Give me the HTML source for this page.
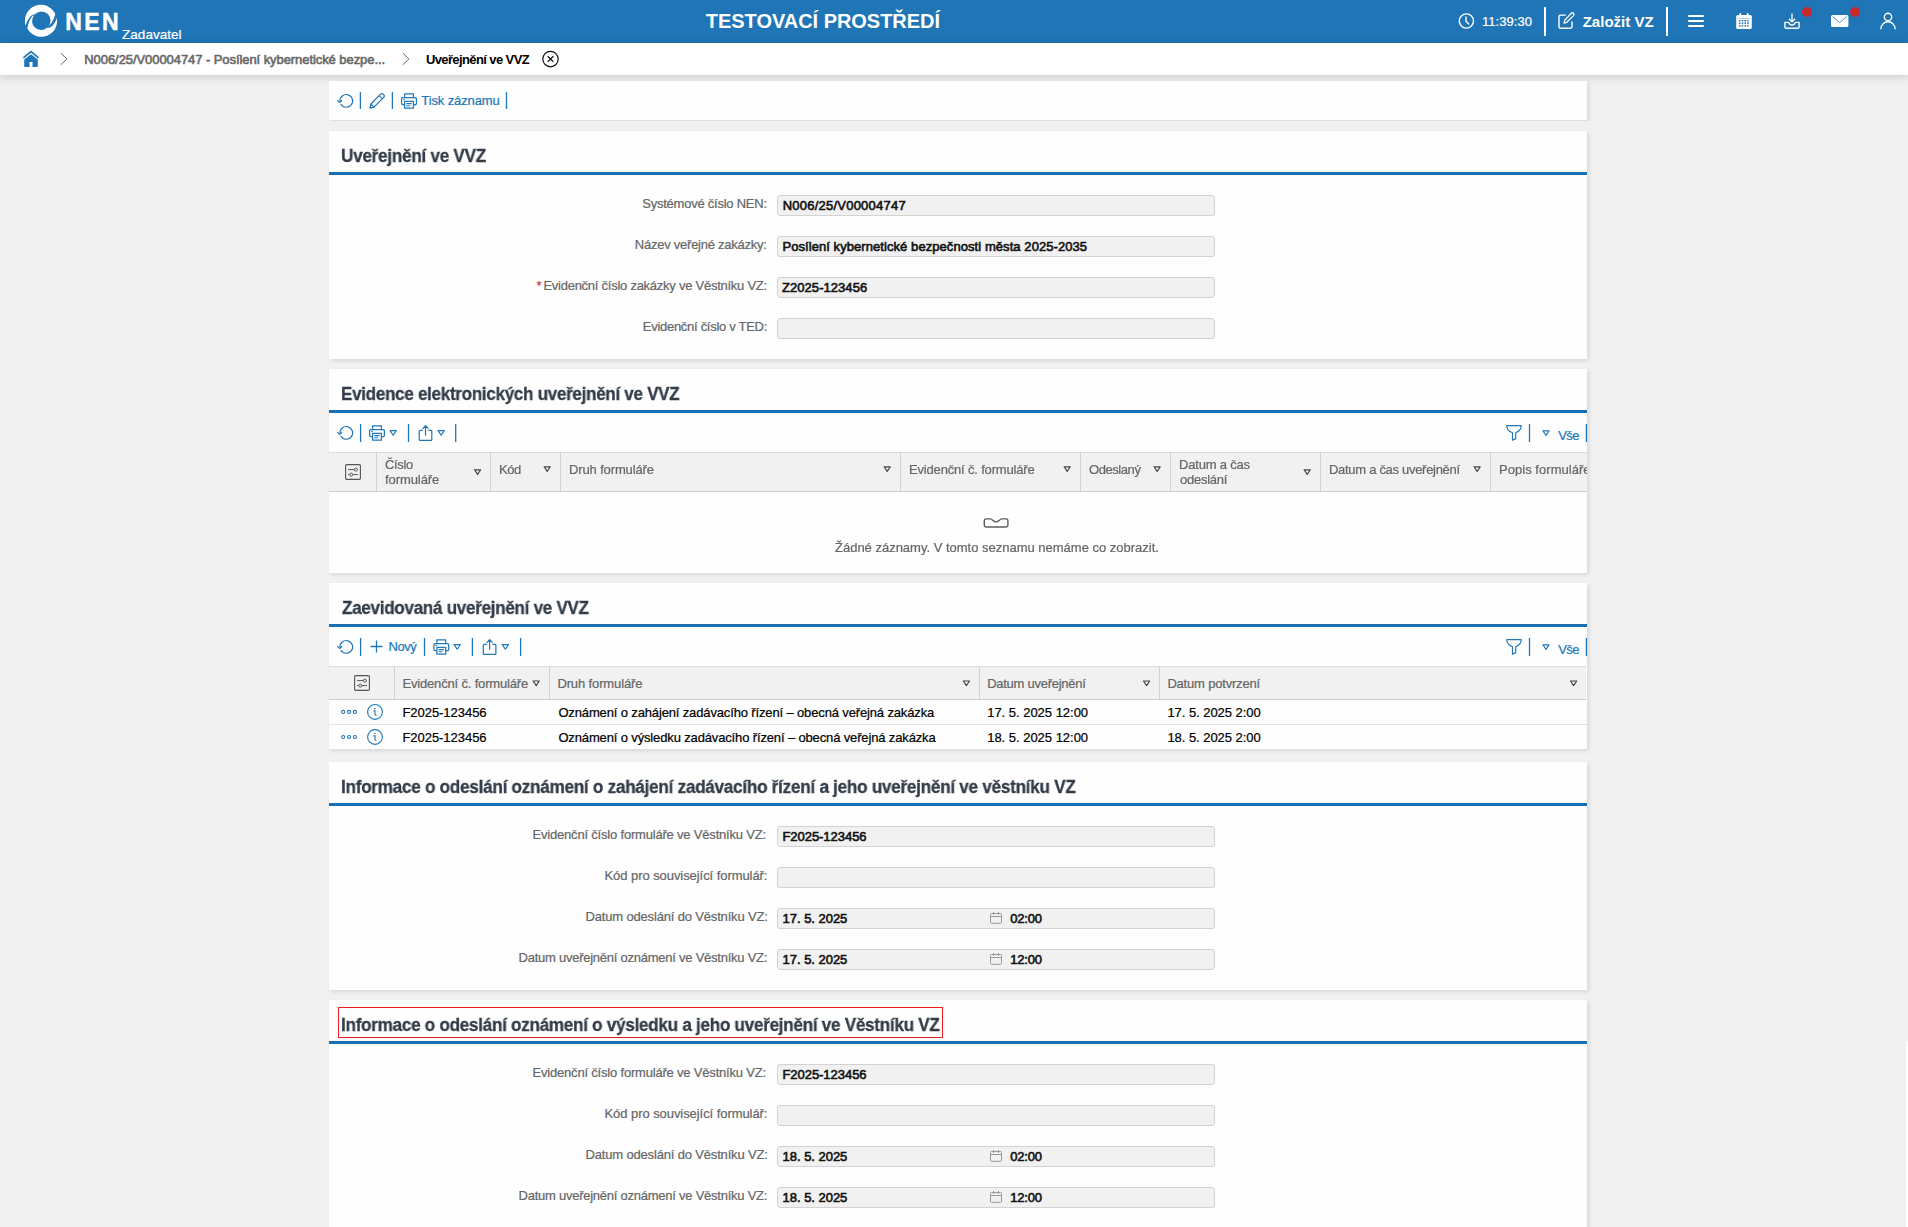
<!DOCTYPE html>
<html lang="cs"><head><meta charset="utf-8"><title>NEN</title>
<style>
html,body{margin:0;padding:0}
body{width:1908px;height:1227px;overflow:hidden;background:#f1f1f1;font-family:"Liberation Sans", sans-serif;position:relative}
.t{position:absolute;white-space:nowrap;line-height:1;display:block}
.abs{position:absolute}
</style></head>
<body>
<div class="abs" style="left:0px;top:0px;width:1908px;height:43px;background:#1f75b5"></div>
<svg class="abs" style="left:20px;top:0px;overflow:visible" width="44" height="44" viewBox="0 0 44 44"><path d="M5.4 25.6 C5.33 25.30 5.05 24.45 4.98 23.80 C4.91 23.15 4.97 22.62 4.99 21.71 C5.01 20.79 4.95 19.44 5.11 18.33 C5.27 17.22 5.56 16.11 5.95 15.06 C6.34 14.01 6.86 12.98 7.46 12.04 C8.07 11.10 8.79 10.20 9.58 9.41 C10.37 8.61 11.26 7.89 12.20 7.28 C13.14 6.68 14.17 6.16 15.22 5.76 C16.27 5.37 17.38 5.08 18.49 4.92 C19.60 4.76 20.75 4.71 21.86 4.79 C22.98 4.86 24.11 5.06 25.19 5.37 C26.26 5.68 27.33 6.11 28.32 6.65 C29.30 7.18 30.25 7.83 31.10 8.55 C31.95 9.28 32.74 10.12 33.42 11.01 C34.10 11.90 34.94 13.10 35.16 13.90 C35.39 14.70 34.93 15.15 34.75 15.80 C34.57 16.45 34.36 17.08 34.10 17.80 C33.84 18.52 33.58 19.32 33.20 20.10 C32.82 20.88 32.30 21.75 31.80 22.50 C31.30 23.25 30.75 23.95 30.20 24.60 C29.65 25.25 28.78 26.10 28.50 26.40 L28.0 26.9 A9.05 9.05 0 1 0 15.0 14.3 C14.67 14.37 13.50 14.55 13.00 14.70 C12.50 14.85 12.47 14.85 12.00 15.20 C11.53 15.55 10.78 16.17 10.20 16.80 C9.62 17.43 9.02 18.25 8.50 19.00 C7.98 19.75 7.48 20.52 7.10 21.30 C6.72 22.08 6.48 22.98 6.20 23.70 C5.92 24.42 5.53 25.28 5.40 25.60 Z" fill="#fff"/><path d="M36.6 18.0 C36.66 18.20 36.87 18.42 36.93 19.18 C37.00 19.94 37.09 21.43 36.98 22.54 C36.88 23.64 36.66 24.77 36.32 25.83 C35.99 26.89 35.53 27.94 34.98 28.90 C34.43 29.87 33.76 30.80 33.02 31.62 C32.28 32.45 31.42 33.22 30.52 33.87 C29.62 34.52 28.63 35.09 27.61 35.53 C26.59 35.98 25.50 36.32 24.41 36.54 C23.32 36.76 22.18 36.86 21.07 36.85 C19.96 36.83 18.82 36.69 17.74 36.44 C16.65 36.19 15.57 35.81 14.57 35.34 C13.56 34.86 12.59 34.27 11.70 33.59 C10.82 32.91 9.99 32.12 9.28 31.27 C8.56 30.42 7.65 29.21 7.39 28.49 C7.14 27.78 7.66 27.52 7.75 27.00 C7.84 26.48 7.79 26.08 7.95 25.40 C8.11 24.72 8.39 23.78 8.70 22.90 C9.01 22.02 9.38 20.95 9.80 20.10 C10.22 19.25 10.73 18.52 11.20 17.80 C11.67 17.08 12.37 16.13 12.60 15.80 L13.9 15.5 A9.05 9.05 0 0 0 27.0 27.85 C27.47 27.81 29.00 27.88 29.80 27.60 C30.60 27.33 31.18 26.73 31.80 26.20 C32.42 25.67 32.95 25.08 33.50 24.40 C34.05 23.72 34.67 22.88 35.10 22.10 C35.53 21.32 35.85 20.38 36.10 19.70 C36.35 19.02 36.52 18.28 36.60 18.00 Z" fill="#fff"/></svg>
<svg class="abs" style="left:1458px;top:13px;overflow:visible" width="17" height="17" viewBox="0 0 17 17" ><g transform="translate(0.40,0.00)"><circle cx="8" cy="8" r="7.1" fill="none" stroke="#fff" stroke-width="1.4"/><path d="M7.6 4 V8.3 L10.3 11" fill="none" stroke="#fff" stroke-width="1.4" stroke-linecap="round"/></g></svg>
<div class="abs" style="left:1544px;top:7px;width:2.2px;height:29px;background:#fff"></div>
<svg class="abs" style="left:1558px;top:12px;overflow:visible" width="18" height="18" viewBox="0 0 18 18" ><g transform="translate(0.20,0.20)"><path d="M7.6 2.9 H2.2 a1.4 1.4 0 0 0 -1.4 1.4 V14.6 a1.4 1.4 0 0 0 1.4 1.4 H12.4 a1.4 1.4 0 0 0 1.4 -1.4 V9.4" fill="none" stroke="#fff" stroke-width="1.4"/><path d="M12.9 1.2 a1.5 1.5 0 0 1 2.4 2.2 L8.6 10.1 L5.8 10.9 L6.6 8 Z" fill="none" stroke="#fff" stroke-width="1.3" stroke-linejoin="round"/></g></svg>
<div class="abs" style="left:1666px;top:7px;width:2.2px;height:29px;background:#fff"></div>
<div class="abs" style="left:1688px;top:14.5px;width:16px;height:2.4px;background:#fff;border-radius:1.2px"></div><div class="abs" style="left:1688px;top:19.8px;width:16px;height:2.4px;background:#fff;border-radius:1.2px"></div><div class="abs" style="left:1688px;top:25.1px;width:16px;height:2.4px;background:#fff;border-radius:1.2px"></div>
<svg class="abs" style="left:1736px;top:13px;overflow:visible" width="17" height="17" viewBox="0 0 17 17" ><g transform="translate(0.00,0.00)"><rect x="0.2" y="1.9" width="15.6" height="14" rx="1.5" fill="#fff"/><rect x="2.9" y="7.0" width="1.55" height="1.45" fill="#1f75b5"/><rect x="5.65" y="7.0" width="1.55" height="1.45" fill="#1f75b5"/><rect x="8.4" y="7.0" width="1.55" height="1.45" fill="#1f75b5"/><rect x="11.15" y="7.0" width="1.55" height="1.45" fill="#1f75b5"/><rect x="2.9" y="9.55" width="1.55" height="1.45" fill="#1f75b5"/><rect x="5.65" y="9.55" width="1.55" height="1.45" fill="#1f75b5"/><rect x="8.4" y="9.55" width="1.55" height="1.45" fill="#1f75b5"/><rect x="11.15" y="9.55" width="1.55" height="1.45" fill="#1f75b5"/><rect x="2.9" y="12.1" width="1.55" height="1.45" fill="#1f75b5"/><rect x="5.65" y="12.1" width="1.55" height="1.45" fill="#1f75b5"/><rect x="8.4" y="12.1" width="1.55" height="1.45" fill="#1f75b5"/><rect x="11.15" y="12.1" width="1.55" height="1.45" fill="#1f75b5"/><rect x="1.6" y="5.3" width="12.8" height="0.7" fill="#1f75b5" opacity="0.55"/><rect x="3.5" y="0" width="1.7" height="3.6" rx="0.8" fill="#fff"/><rect x="10.8" y="0" width="1.7" height="3.6" rx="0.8" fill="#fff"/></g></svg>
<svg class="abs" style="left:1784px;top:13px;overflow:visible" width="17" height="17" viewBox="0 0 17 17" ><g transform="translate(0.00,0.00)"><path d="M0.9 9.4 H4.6 a3.5 3.5 0 0 0 6.8 0 H15.1 V14 a1.2 1.2 0 0 1 -1.2 1.2 H2.1 a1.2 1.2 0 0 1 -1.2 -1.2 Z" fill="none" stroke="#fff" stroke-width="1.4" stroke-linejoin="round"/><path d="M8 0.4 V8.6 M4.9 5.8 L8 8.9 L11.1 5.8" fill="none" stroke="#fff" stroke-width="1.3"/></g></svg>
<div class="abs" style="left:1802px;top:7px;width:10.2px;height:10.2px;background:#c9282d;border-radius:50%"></div>
<svg class="abs" style="left:1831px;top:15px;overflow:visible" width="19" height="13" viewBox="0 0 19 13" ><g transform="translate(0.00,0.00)"><rect x="0" y="0" width="17.4" height="12" rx="1.6" fill="#fff"/><path d="M1.6 1.4 L8.7 7.6 L15.8 1.4" fill="none" stroke="#1f75b5" stroke-width="0.8"/></g></svg>
<div class="abs" style="left:1850px;top:7px;width:10.2px;height:10.2px;background:#c9282d;border-radius:50%"></div>
<svg class="abs" style="left:1880px;top:12px;overflow:visible" width="17" height="18" viewBox="0 0 17 18" ><g transform="translate(0.00,0.60)"><circle cx="8" cy="4.4" r="3.7" fill="none" stroke="#fff" stroke-width="1.4"/><path d="M0.8 16.6 a7.2 7.4 0 0 1 14.4 0" fill="none" stroke="#fff" stroke-width="1.4"/></g></svg>
<div class="abs" style="left:0px;top:43px;width:1908px;height:32px;background:#fff;box-shadow:0 2px 10px rgba(0,0,0,.16)"></div>
<svg class="abs" style="left:23px;top:51px;overflow:visible" width="17" height="17" viewBox="0 0 17 17" ><g transform="translate(0.00,0.00)"><path d="M0.4 6.9 L8 0.7 L15.6 6.9" fill="none" stroke="#1f75b5" stroke-width="1.7" stroke-linejoin="miter"/><path d="M1.2 8.6 L8 3.2 L14.8 8.6 V14.9 a1 1 0 0 1 -1 1 H9.5 V11 H6.5 V15.9 H2.2 a1 1 0 0 1 -1 -1 Z" fill="#1f75b5"/></g></svg>
<svg class="abs" style="left:60px;top:52px;overflow:visible" width="9" height="14" viewBox="0 0 9 14" ><g transform="translate(0.00,0.50)"><path d="M0.8 0.6 L6.9 6.5 L0.8 12.4" fill="none" stroke="#666" stroke-width="1.0"/></g></svg>
<svg class="abs" style="left:402px;top:52px;overflow:visible" width="9" height="14" viewBox="0 0 9 14" ><g transform="translate(0.00,0.50)"><path d="M0.8 0.6 L6.9 6.5 L0.8 12.4" fill="none" stroke="#666" stroke-width="1.0"/></g></svg>
<svg class="abs" style="left:542px;top:50px;overflow:visible" width="18" height="18" viewBox="0 0 18 18" ><g transform="translate(0.00,0.60)"><circle cx="8.5" cy="8.5" r="7.7" fill="none" stroke="#111" stroke-width="1.2"/><path d="M5.7 5.7 L11.3 11.3 M11.3 5.7 L5.7 11.3" stroke="#111" stroke-width="1.3"/></g></svg>
<div class="abs" style="left:329px;top:81px;width:1258px;height:39px;background:#fefefe;box-shadow:2px 2px 4px rgba(0,0,0,.105);clip-path:inset(-10px -10px -1px -10px)"></div>
<svg class="abs" style="left:337px;top:93px;overflow:visible" width="17" height="16" viewBox="0 0 17 16" ><g transform="translate(0.00,0.60)"><path d="M3.0 7.9 A6.35 6.35 0 1 1 3.75 10.35" fill="none" stroke="#2177b7" stroke-width="1.2"/><path d="M0.3 6.5 L2.75 8.9 L5.1 6.7" fill="none" stroke="#2177b7" stroke-width="1.2" stroke-linejoin="miter"/></g></svg>
<svg class="abs" style="left:359px;top:92px;overflow:visible" width="3" height="18" viewBox="0 0 3 18" ><g transform="translate(0.40,0.00)"><rect x="0.35" y="0" width="1.3" height="17" fill="#2177b7"/></g></svg>
<svg class="abs" style="left:369px;top:93px;overflow:visible" width="17" height="17" viewBox="0 0 17 17" ><g transform="translate(0.00,0.00)"><path d="M11.3 1.4 a2.2 2.2 0 0 1 3.2 3.2 L5 14.1 L0.9 15.1 L1.9 11 Z" fill="none" stroke="#2177b7" stroke-width="1.2" stroke-linejoin="round"/><path d="M10.2 2.6 L13.4 5.8 M1.9 11 L5 14.1" fill="none" stroke="#2177b7" stroke-width="1.1"/></g></svg>
<svg class="abs" style="left:391px;top:92px;overflow:visible" width="3" height="18" viewBox="0 0 3 18" ><g transform="translate(0.40,0.00)"><rect x="0.35" y="0" width="1.3" height="17" fill="#2177b7"/></g></svg>
<svg class="abs" style="left:401px;top:93px;overflow:visible" width="17" height="17" viewBox="0 0 17 17" ><g transform="translate(0.00,0.00)"><path d="M3.6 4.6 V0.8 H12.4 V4.6" fill="none" stroke="#2177b7" stroke-width="1.2" stroke-linejoin="round"/><path d="M3.6 11.6 H1.8 a1.2 1.2 0 0 1 -1.2 -1.2 V5.8 a1.2 1.2 0 0 1 1.2 -1.2 H14.2 a1.2 1.2 0 0 1 1.2 1.2 V10.4 a1.2 1.2 0 0 1 -1.2 1.2 H12.4" fill="none" stroke="#2177b7" stroke-width="1.2" stroke-linejoin="round"/><rect x="3.6" y="8.4" width="8.8" height="6.8" fill="#fff" stroke="#2177b7" stroke-width="1.2" stroke-linejoin="round"/><path d="M5.3 10.6 H10.7 M5.3 12.8 H9.2" stroke="#2177b7" stroke-width="1.1"/><rect x="2.2" y="6.1" width="1.7" height="1.1" fill="#2177b7"/></g></svg>
<svg class="abs" style="left:505px;top:92px;overflow:visible" width="3" height="18" viewBox="0 0 3 18" ><g transform="translate(0.50,0.00)"><rect x="0.35" y="0" width="1.3" height="17" fill="#2177b7"/></g></svg>
<div class="abs" style="left:329px;top:131px;width:1258px;height:228px;background:#fefefe;box-shadow:2px 2px 4px rgba(0,0,0,.105)"></div>
<div class="abs" style="left:329px;top:172px;width:1258px;height:3px;background:#1a6fb3"></div>
<div class="abs" style="left:777px;top:195px;width:436px;height:19px;background:#f1f1f1;border:1px solid #d3d3d3;border-radius:3px"></div>
<div class="abs" style="left:777px;top:236px;width:436px;height:19px;background:#f1f1f1;border:1px solid #d3d3d3;border-radius:3px"></div>
<div class="abs" style="left:777px;top:277px;width:436px;height:19px;background:#f1f1f1;border:1px solid #d3d3d3;border-radius:3px"></div>
<div class="abs" style="left:777px;top:318px;width:436px;height:19px;background:#f1f1f1;border:1px solid #d3d3d3;border-radius:3px"></div>
<div class="abs" style="left:329px;top:369px;width:1258px;height:204px;background:#fefefe;box-shadow:2px 2px 4px rgba(0,0,0,.105)"></div>
<div class="abs" style="left:329px;top:410px;width:1258px;height:3px;background:#1a6fb3"></div>
<svg class="abs" style="left:337px;top:425px;overflow:visible" width="17" height="16" viewBox="0 0 17 16" ><g transform="translate(0.00,0.60)"><path d="M3.0 7.9 A6.35 6.35 0 1 1 3.75 10.35" fill="none" stroke="#2177b7" stroke-width="1.2"/><path d="M0.3 6.5 L2.75 8.9 L5.1 6.7" fill="none" stroke="#2177b7" stroke-width="1.2" stroke-linejoin="miter"/></g></svg>
<svg class="abs" style="left:359px;top:424px;overflow:visible" width="3" height="19" viewBox="0 0 3 19" ><g transform="translate(0.60,0.00)"><rect x="0.35" y="0" width="1.3" height="18" fill="#2177b7"/></g></svg>
<svg class="abs" style="left:369px;top:425px;overflow:visible" width="17" height="17" viewBox="0 0 17 17" ><g transform="translate(0.00,0.00)"><path d="M3.6 4.6 V0.8 H12.4 V4.6" fill="none" stroke="#2177b7" stroke-width="1.2" stroke-linejoin="round"/><path d="M3.6 11.6 H1.8 a1.2 1.2 0 0 1 -1.2 -1.2 V5.8 a1.2 1.2 0 0 1 1.2 -1.2 H14.2 a1.2 1.2 0 0 1 1.2 1.2 V10.4 a1.2 1.2 0 0 1 -1.2 1.2 H12.4" fill="none" stroke="#2177b7" stroke-width="1.2" stroke-linejoin="round"/><rect x="3.6" y="8.4" width="8.8" height="6.8" fill="#fff" stroke="#2177b7" stroke-width="1.2" stroke-linejoin="round"/><path d="M5.3 10.6 H10.7 M5.3 12.8 H9.2" stroke="#2177b7" stroke-width="1.1"/><rect x="2.2" y="6.1" width="1.7" height="1.1" fill="#2177b7"/></g></svg>
<svg class="abs" style="left:389px;top:430px;overflow:visible" width="9" height="7" viewBox="0 0 9 7" ><g transform="translate(0.20,0.00)"><path d="M0.9 0.6 H7.1 L4 5.2 Z" fill="none" stroke="#2177b7" stroke-width="1.15" stroke-linejoin="round"/></g></svg>
<svg class="abs" style="left:407px;top:424px;overflow:visible" width="3" height="19" viewBox="0 0 3 19" ><g transform="translate(0.50,0.00)"><rect x="0.35" y="0" width="1.3" height="18" fill="#2177b7"/></g></svg>
<svg class="abs" style="left:418px;top:425px;overflow:visible" width="15" height="17" viewBox="0 0 15 17" ><g transform="translate(0.50,0.00)"><path d="M4.2 5.4 H1.6 a0.9 0.9 0 0 0 -0.9 0.9 V14.4 a0.9 0.9 0 0 0 0.9 0.9 H12.4 a0.9 0.9 0 0 0 0.9 -0.9 V6.3 a0.9 0.9 0 0 0 -0.9 -0.9 H9.8" fill="none" stroke="#2177b7" stroke-width="1.2" stroke-linejoin="round"/><path d="M7 10.2 V0.9 M4.4 3.3 L7 0.7 L9.6 3.3" fill="none" stroke="#2177b7" stroke-width="1.2" stroke-linecap="round" stroke-linejoin="round"/></g></svg>
<svg class="abs" style="left:437px;top:430px;overflow:visible" width="9" height="7" viewBox="0 0 9 7" ><g transform="translate(0.20,0.00)"><path d="M0.9 0.6 H7.1 L4 5.2 Z" fill="none" stroke="#2177b7" stroke-width="1.15" stroke-linejoin="round"/></g></svg>
<svg class="abs" style="left:454px;top:424px;overflow:visible" width="3" height="19" viewBox="0 0 3 19" ><g transform="translate(0.70,0.00)"><rect x="0.35" y="0" width="1.3" height="18" fill="#2177b7"/></g></svg>
<svg class="abs" style="left:1506px;top:425px;overflow:visible" width="17" height="17" viewBox="0 0 17 17" ><g transform="translate(0.00,0.00)"><path d="M0.8 0.7 H15.2 C15.2 4.2 12.6 6.6 9.7 7.8 V13.6 L6.5 15.3 V7.8 C3.4 6.6 0.8 4.2 0.8 0.7 Z" fill="none" stroke="#2177b7" stroke-width="1.2" stroke-linejoin="round"/></g></svg>
<svg class="abs" style="left:1528px;top:424px;overflow:visible" width="3" height="19" viewBox="0 0 3 19" ><g transform="translate(0.50,0.00)"><rect x="0.35" y="0" width="1.3" height="18" fill="#2177b7"/></g></svg>
<svg class="abs" style="left:1542px;top:430px;overflow:visible" width="9" height="7" viewBox="0 0 9 7" ><g transform="translate(0.00,0.20)"><path d="M0.9 0.6 H7.1 L4 5.2 Z" fill="none" stroke="#2177b7" stroke-width="1.15" stroke-linejoin="round"/></g></svg>
<svg class="abs" style="left:1585px;top:424px;overflow:visible" width="3" height="19" viewBox="0 0 3 19" ><g transform="translate(0.40,0.00)"><rect x="0.35" y="0" width="1.3" height="18" fill="#2177b7"/></g></svg>
<div class="abs" style="left:329px;top:452px;width:1258px;height:38px;background:#f1f1f1;border-top:1px solid #dcdcdc;border-bottom:1px solid #cdcdcd"></div>
<div class="abs" style="left:376px;top:453px;width:1px;height:38px;background:#d2d2d2"></div>
<div class="abs" style="left:490px;top:453px;width:1px;height:38px;background:#d2d2d2"></div>
<div class="abs" style="left:560px;top:453px;width:1px;height:38px;background:#d2d2d2"></div>
<div class="abs" style="left:900px;top:453px;width:1px;height:38px;background:#d2d2d2"></div>
<div class="abs" style="left:1080px;top:453px;width:1px;height:38px;background:#d2d2d2"></div>
<div class="abs" style="left:1170px;top:453px;width:1px;height:38px;background:#d2d2d2"></div>
<div class="abs" style="left:1320px;top:453px;width:1px;height:38px;background:#d2d2d2"></div>
<div class="abs" style="left:1490px;top:453px;width:1px;height:38px;background:#d2d2d2"></div>
<svg class="abs" style="left:345px;top:464px;overflow:visible" width="17" height="17" viewBox="0 0 17 17" ><g transform="translate(0.00,0.00)"><rect x="0.6" y="0.6" width="14.8" height="14.8" rx="1.2" fill="none" stroke="#555" stroke-width="1.1"/><path d="M3 5.6 H9.2 M12.4 5.6 H13 M3 10.6 H4.4 M8 10.6 H13" stroke="#555" stroke-width="1"/><circle cx="10.8" cy="5.6" r="1.5" fill="none" stroke="#555" stroke-width="1"/><circle cx="6.2" cy="10.6" r="1.5" fill="none" stroke="#555" stroke-width="1"/></g></svg>
<svg class="abs" style="left:473px;top:469px;overflow:visible" width="9" height="7" viewBox="0 0 9 7" ><g transform="translate(0.60,0.20)"><path d="M0.9 0.6 H7.1 L4 5.2 Z" fill="none" stroke="#444" stroke-width="1.15" stroke-linejoin="round"/></g></svg>
<svg class="abs" style="left:543px;top:466px;overflow:visible" width="9" height="7" viewBox="0 0 9 7" ><g transform="translate(0.20,0.20)"><path d="M0.9 0.6 H7.1 L4 5.2 Z" fill="none" stroke="#444" stroke-width="1.15" stroke-linejoin="round"/></g></svg>
<svg class="abs" style="left:883px;top:466px;overflow:visible" width="9" height="7" viewBox="0 0 9 7" ><g transform="translate(0.20,0.20)"><path d="M0.9 0.6 H7.1 L4 5.2 Z" fill="none" stroke="#444" stroke-width="1.15" stroke-linejoin="round"/></g></svg>
<svg class="abs" style="left:1063px;top:466px;overflow:visible" width="9" height="7" viewBox="0 0 9 7" ><g transform="translate(0.20,0.20)"><path d="M0.9 0.6 H7.1 L4 5.2 Z" fill="none" stroke="#444" stroke-width="1.15" stroke-linejoin="round"/></g></svg>
<svg class="abs" style="left:1153px;top:466px;overflow:visible" width="9" height="7" viewBox="0 0 9 7" ><g transform="translate(0.20,0.20)"><path d="M0.9 0.6 H7.1 L4 5.2 Z" fill="none" stroke="#444" stroke-width="1.15" stroke-linejoin="round"/></g></svg>
<svg class="abs" style="left:1303px;top:469px;overflow:visible" width="9" height="7" viewBox="0 0 9 7" ><g transform="translate(0.20,0.20)"><path d="M0.9 0.6 H7.1 L4 5.2 Z" fill="none" stroke="#444" stroke-width="1.15" stroke-linejoin="round"/></g></svg>
<svg class="abs" style="left:1473px;top:466px;overflow:visible" width="9" height="7" viewBox="0 0 9 7" ><g transform="translate(0.20,0.20)"><path d="M0.9 0.6 H7.1 L4 5.2 Z" fill="none" stroke="#444" stroke-width="1.15" stroke-linejoin="round"/></g></svg>
<svg class="abs" style="left:983px;top:518px;overflow:visible" width="27" height="11" viewBox="0 0 27 11" ><g transform="translate(0.00,0.00)"><path d="M3 0.9 H7.4 C9.6 0.9 10.2 3.9 13.1 3.9 C16 3.9 16.6 0.9 18.8 0.9 H23.2 a1.7 1.7 0 0 1 1.7 1.7 V7.3 a1.7 1.7 0 0 1 -1.7 1.7 H3 a1.7 1.7 0 0 1 -1.7 -1.7 V2.6 a1.7 1.7 0 0 1 1.7 -1.7 Z" fill="none" stroke="#5c5c5c" stroke-width="1.4" stroke-linejoin="round"/></g></svg>
<div class="abs" style="left:329px;top:583px;width:1258px;height:166px;background:#fefefe;box-shadow:2px 2px 4px rgba(0,0,0,.105)"></div>
<div class="abs" style="left:329px;top:624px;width:1258px;height:3px;background:#1a6fb3"></div>
<svg class="abs" style="left:337px;top:639px;overflow:visible" width="17" height="16" viewBox="0 0 17 16" ><g transform="translate(0.00,0.60)"><path d="M3.0 7.9 A6.35 6.35 0 1 1 3.75 10.35" fill="none" stroke="#2177b7" stroke-width="1.2"/><path d="M0.3 6.5 L2.75 8.9 L5.1 6.7" fill="none" stroke="#2177b7" stroke-width="1.2" stroke-linejoin="miter"/></g></svg>
<svg class="abs" style="left:359px;top:638px;overflow:visible" width="3" height="19" viewBox="0 0 3 19" ><g transform="translate(0.60,0.00)"><rect x="0.35" y="0" width="1.3" height="18" fill="#2177b7"/></g></svg>
<svg class="abs" style="left:370px;top:640px;overflow:visible" width="13" height="13" viewBox="0 0 13 13" ><g transform="translate(0.50,0.50)"><path d="M6 0 V12 M0 6 H12" stroke="#2177b7" stroke-width="1.3"/></g></svg>
<svg class="abs" style="left:423px;top:638px;overflow:visible" width="3" height="19" viewBox="0 0 3 19" ><g transform="translate(0.50,0.00)"><rect x="0.35" y="0" width="1.3" height="18" fill="#2177b7"/></g></svg>
<svg class="abs" style="left:433px;top:639px;overflow:visible" width="17" height="17" viewBox="0 0 17 17" ><g transform="translate(0.30,0.00)"><path d="M3.6 4.6 V0.8 H12.4 V4.6" fill="none" stroke="#2177b7" stroke-width="1.2" stroke-linejoin="round"/><path d="M3.6 11.6 H1.8 a1.2 1.2 0 0 1 -1.2 -1.2 V5.8 a1.2 1.2 0 0 1 1.2 -1.2 H14.2 a1.2 1.2 0 0 1 1.2 1.2 V10.4 a1.2 1.2 0 0 1 -1.2 1.2 H12.4" fill="none" stroke="#2177b7" stroke-width="1.2" stroke-linejoin="round"/><rect x="3.6" y="8.4" width="8.8" height="6.8" fill="#fff" stroke="#2177b7" stroke-width="1.2" stroke-linejoin="round"/><path d="M5.3 10.6 H10.7 M5.3 12.8 H9.2" stroke="#2177b7" stroke-width="1.1"/><rect x="2.2" y="6.1" width="1.7" height="1.1" fill="#2177b7"/></g></svg>
<svg class="abs" style="left:453px;top:644px;overflow:visible" width="9" height="7" viewBox="0 0 9 7" ><g transform="translate(0.20,0.00)"><path d="M0.9 0.6 H7.1 L4 5.2 Z" fill="none" stroke="#2177b7" stroke-width="1.15" stroke-linejoin="round"/></g></svg>
<svg class="abs" style="left:471px;top:638px;overflow:visible" width="3" height="19" viewBox="0 0 3 19" ><g transform="translate(0.40,0.00)"><rect x="0.35" y="0" width="1.3" height="18" fill="#2177b7"/></g></svg>
<svg class="abs" style="left:482px;top:639px;overflow:visible" width="15" height="17" viewBox="0 0 15 17" ><g transform="translate(0.60,0.00)"><path d="M4.2 5.4 H1.6 a0.9 0.9 0 0 0 -0.9 0.9 V14.4 a0.9 0.9 0 0 0 0.9 0.9 H12.4 a0.9 0.9 0 0 0 0.9 -0.9 V6.3 a0.9 0.9 0 0 0 -0.9 -0.9 H9.8" fill="none" stroke="#2177b7" stroke-width="1.2" stroke-linejoin="round"/><path d="M7 10.2 V0.9 M4.4 3.3 L7 0.7 L9.6 3.3" fill="none" stroke="#2177b7" stroke-width="1.2" stroke-linecap="round" stroke-linejoin="round"/></g></svg>
<svg class="abs" style="left:501px;top:644px;overflow:visible" width="9" height="7" viewBox="0 0 9 7" ><g transform="translate(0.40,0.00)"><path d="M0.9 0.6 H7.1 L4 5.2 Z" fill="none" stroke="#2177b7" stroke-width="1.15" stroke-linejoin="round"/></g></svg>
<svg class="abs" style="left:519px;top:638px;overflow:visible" width="3" height="19" viewBox="0 0 3 19" ><g transform="translate(0.60,0.00)"><rect x="0.35" y="0" width="1.3" height="18" fill="#2177b7"/></g></svg>
<svg class="abs" style="left:1506px;top:639px;overflow:visible" width="17" height="17" viewBox="0 0 17 17" ><g transform="translate(0.00,0.00)"><path d="M0.8 0.7 H15.2 C15.2 4.2 12.6 6.6 9.7 7.8 V13.6 L6.5 15.3 V7.8 C3.4 6.6 0.8 4.2 0.8 0.7 Z" fill="none" stroke="#2177b7" stroke-width="1.2" stroke-linejoin="round"/></g></svg>
<svg class="abs" style="left:1528px;top:638px;overflow:visible" width="3" height="19" viewBox="0 0 3 19" ><g transform="translate(0.50,0.00)"><rect x="0.35" y="0" width="1.3" height="18" fill="#2177b7"/></g></svg>
<svg class="abs" style="left:1542px;top:644px;overflow:visible" width="9" height="7" viewBox="0 0 9 7" ><g transform="translate(0.00,0.20)"><path d="M0.9 0.6 H7.1 L4 5.2 Z" fill="none" stroke="#2177b7" stroke-width="1.15" stroke-linejoin="round"/></g></svg>
<svg class="abs" style="left:1585px;top:638px;overflow:visible" width="3" height="19" viewBox="0 0 3 19" ><g transform="translate(0.40,0.00)"><rect x="0.35" y="0" width="1.3" height="18" fill="#2177b7"/></g></svg>
<div class="abs" style="left:329px;top:666px;width:1257px;height:32px;background:#f1f1f1;border-top:1px solid #dcdcdc;border-bottom:1px solid #cdcdcd"></div>
<div class="abs" style="left:394px;top:667px;width:1px;height:32px;background:#d2d2d2"></div>
<div class="abs" style="left:549px;top:667px;width:1px;height:32px;background:#d2d2d2"></div>
<div class="abs" style="left:979px;top:667px;width:1px;height:32px;background:#d2d2d2"></div>
<div class="abs" style="left:1159px;top:667px;width:1px;height:32px;background:#d2d2d2"></div>
<svg class="abs" style="left:354px;top:675px;overflow:visible" width="17" height="17" viewBox="0 0 17 17" ><g transform="translate(0.00,0.00)"><rect x="0.6" y="0.6" width="14.8" height="14.8" rx="1.2" fill="none" stroke="#555" stroke-width="1.1"/><path d="M3 5.6 H9.2 M12.4 5.6 H13 M3 10.6 H4.4 M8 10.6 H13" stroke="#555" stroke-width="1"/><circle cx="10.8" cy="5.6" r="1.5" fill="none" stroke="#555" stroke-width="1"/><circle cx="6.2" cy="10.6" r="1.5" fill="none" stroke="#555" stroke-width="1"/></g></svg>
<svg class="abs" style="left:532px;top:680px;overflow:visible" width="9" height="7" viewBox="0 0 9 7" ><g transform="translate(0.20,0.40)"><path d="M0.9 0.6 H7.1 L4 5.2 Z" fill="none" stroke="#444" stroke-width="1.15" stroke-linejoin="round"/></g></svg>
<svg class="abs" style="left:962px;top:680px;overflow:visible" width="9" height="7" viewBox="0 0 9 7" ><g transform="translate(0.40,0.40)"><path d="M0.9 0.6 H7.1 L4 5.2 Z" fill="none" stroke="#444" stroke-width="1.15" stroke-linejoin="round"/></g></svg>
<svg class="abs" style="left:1142px;top:680px;overflow:visible" width="9" height="7" viewBox="0 0 9 7" ><g transform="translate(0.60,0.40)"><path d="M0.9 0.6 H7.1 L4 5.2 Z" fill="none" stroke="#444" stroke-width="1.15" stroke-linejoin="round"/></g></svg>
<svg class="abs" style="left:1569px;top:680px;overflow:visible" width="9" height="7" viewBox="0 0 9 7" ><g transform="translate(0.60,0.40)"><path d="M0.9 0.6 H7.1 L4 5.2 Z" fill="none" stroke="#444" stroke-width="1.15" stroke-linejoin="round"/></g></svg>
<div class="abs" style="left:329px;top:724px;width:1258px;height:1px;background:#e2e2e2"></div>
<svg class="abs" style="left:340px;top:709px;overflow:visible" width="18" height="6" viewBox="0 0 18 6" ><g transform="translate(0.60,0.45)"><circle cx="2.6" cy="2.5" r="1.55" fill="none" stroke="#2177b7" stroke-width="1.1"/><circle cx="8.45" cy="2.5" r="1.55" fill="none" stroke="#2177b7" stroke-width="1.1"/><circle cx="14.3" cy="2.5" r="1.55" fill="none" stroke="#2177b7" stroke-width="1.1"/></g></svg>
<svg class="abs" style="left:367px;top:703px;overflow:visible" width="17" height="17" viewBox="0 0 17 17" ><g transform="translate(0.00,0.95)"><circle cx="8" cy="8" r="7.4" fill="none" stroke="#2177b7" stroke-width="1.1"/><path d="M6.8 6.9 H8.0 V10.4 a0.9 0.9 0 0 0 1.1 0.8" fill="none" stroke="#2177b7" stroke-width="1.1" stroke-linecap="round"/><circle cx="7.8" cy="4.55" r="0.75" fill="#2177b7"/></g></svg>
<svg class="abs" style="left:340px;top:734px;overflow:visible" width="18" height="6" viewBox="0 0 18 6" ><g transform="translate(0.60,0.50)"><circle cx="2.6" cy="2.5" r="1.55" fill="none" stroke="#2177b7" stroke-width="1.1"/><circle cx="8.45" cy="2.5" r="1.55" fill="none" stroke="#2177b7" stroke-width="1.1"/><circle cx="14.3" cy="2.5" r="1.55" fill="none" stroke="#2177b7" stroke-width="1.1"/></g></svg>
<svg class="abs" style="left:367px;top:729px;overflow:visible" width="17" height="17" viewBox="0 0 17 17" ><g transform="translate(0.00,0.00)"><circle cx="8" cy="8" r="7.4" fill="none" stroke="#2177b7" stroke-width="1.1"/><path d="M6.8 6.9 H8.0 V10.4 a0.9 0.9 0 0 0 1.1 0.8" fill="none" stroke="#2177b7" stroke-width="1.1" stroke-linecap="round"/><circle cx="7.8" cy="4.55" r="0.75" fill="#2177b7"/></g></svg>
<div class="abs" style="left:329px;top:762px;width:1258px;height:228px;background:#fefefe;box-shadow:2px 2px 4px rgba(0,0,0,.105)"></div>
<div class="abs" style="left:329px;top:803px;width:1258px;height:3px;background:#1a6fb3"></div>
<div class="abs" style="left:777px;top:826px;width:436px;height:19px;background:#f1f1f1;border:1px solid #d3d3d3;border-radius:3px"></div>
<div class="abs" style="left:777px;top:867px;width:436px;height:19px;background:#f1f1f1;border:1px solid #d3d3d3;border-radius:3px"></div>
<div class="abs" style="left:777px;top:908px;width:436px;height:19px;background:#f1f1f1;border:1px solid #d3d3d3;border-radius:3px"></div>
<div class="abs" style="left:777px;top:949px;width:436px;height:19px;background:#f1f1f1;border:1px solid #d3d3d3;border-radius:3px"></div>
<svg class="abs" style="left:990px;top:912px;overflow:visible" width="14" height="14" viewBox="0 0 14 14" ><g transform="translate(0.00,0.00)"><rect x="0.5" y="1.5" width="11" height="9.8" rx="1" fill="none" stroke="#999" stroke-width="1"/><path d="M0.5 4.5 H11.5 M3.5 0 V2.8 M8.5 0 V2.8" stroke="#999" stroke-width="1"/></g></svg>
<svg class="abs" style="left:990px;top:953px;overflow:visible" width="14" height="14" viewBox="0 0 14 14" ><g transform="translate(0.00,0.00)"><rect x="0.5" y="1.5" width="11" height="9.8" rx="1" fill="none" stroke="#999" stroke-width="1"/><path d="M0.5 4.5 H11.5 M3.5 0 V2.8 M8.5 0 V2.8" stroke="#999" stroke-width="1"/></g></svg>
<div class="abs" style="left:329px;top:1000px;width:1258px;height:240px;background:#fefefe;box-shadow:2px 2px 4px rgba(0,0,0,.105)"></div>
<div class="abs" style="left:329px;top:1041px;width:1258px;height:3px;background:#1a6fb3"></div>
<div class="abs" style="left:777px;top:1064px;width:436px;height:19px;background:#f1f1f1;border:1px solid #d3d3d3;border-radius:3px"></div>
<div class="abs" style="left:777px;top:1105px;width:436px;height:19px;background:#f1f1f1;border:1px solid #d3d3d3;border-radius:3px"></div>
<div class="abs" style="left:777px;top:1146px;width:436px;height:19px;background:#f1f1f1;border:1px solid #d3d3d3;border-radius:3px"></div>
<div class="abs" style="left:777px;top:1187px;width:436px;height:19px;background:#f1f1f1;border:1px solid #d3d3d3;border-radius:3px"></div>
<svg class="abs" style="left:990px;top:1150px;overflow:visible" width="14" height="14" viewBox="0 0 14 14" ><g transform="translate(0.00,0.00)"><rect x="0.5" y="1.5" width="11" height="9.8" rx="1" fill="none" stroke="#999" stroke-width="1"/><path d="M0.5 4.5 H11.5 M3.5 0 V2.8 M8.5 0 V2.8" stroke="#999" stroke-width="1"/></g></svg>
<svg class="abs" style="left:990px;top:1191px;overflow:visible" width="14" height="14" viewBox="0 0 14 14" ><g transform="translate(0.00,0.00)"><rect x="0.5" y="1.5" width="11" height="9.8" rx="1" fill="none" stroke="#999" stroke-width="1"/><path d="M0.5 4.5 H11.5 M3.5 0 V2.8 M8.5 0 V2.8" stroke="#999" stroke-width="1"/></g></svg>
<div class="abs" style="left:338px;top:1007px;width:602.5px;height:29px;border:1px solid #ec1c24"></div>
<div class="abs" style="left:1906px;top:1042px;width:2px;height:185px;background:#fefefe"></div>
<span class="t" style="left:65.30px;top:11.00px;font-size:23px;font-weight:700;color:#fff;letter-spacing:2.350px;-webkit-text-stroke:0.5px #fff">NEN</span>
<span class="t" style="left:122.00px;top:28.00px;font-size:13.5px;font-weight:400;color:#fff;letter-spacing:0.038px;-webkit-text-stroke:0.22px #fff">Zadavatel</span>
<span class="t" style="left:705.80px;top:11.00px;font-size:20px;font-weight:700;color:#fff;letter-spacing:-0.033px">TESTOVACÍ PROSTŘEDÍ</span>
<span class="t" style="left:1482.00px;top:15.00px;font-size:13px;font-weight:400;color:#fff;letter-spacing:0.057px;-webkit-text-stroke:0.22px #fff">11:39:30</span>
<span class="t" style="left:1582.70px;top:14.00px;font-size:15px;font-weight:700;color:#fff;letter-spacing:0.011px">Založit VZ</span>
<span class="t" style="left:84.30px;top:53.00px;font-size:13px;font-weight:400;color:#686868;letter-spacing:-0.071px;-webkit-text-stroke:0.6px #686868">N006/25/V00004747 - Posílení kybernetické bezpe...</span>
<span class="t" style="left:425.90px;top:53.00px;font-size:13px;font-weight:700;color:#000;letter-spacing:-0.606px">Uveřejnění ve VVZ</span>
<span class="t" style="left:421.30px;top:94.00px;font-size:13px;font-weight:400;color:#2177b7;letter-spacing:-0.118px;-webkit-text-stroke:0.22px #2177b7">Tisk záznamu</span>
<span class="t" style="left:340.85px;top:147.00px;font-size:18px;font-weight:700;color:#323c48;letter-spacing:-0.302px;will-change:transform;transform-origin:0 0;transform:scaleX(0.9539);-webkit-text-stroke:0.3px #323c48">Uveřejnění ve VVZ</span>
<span class="t" style="left:341.05px;top:385.00px;font-size:18px;font-weight:700;color:#323c48;letter-spacing:-0.322px;will-change:transform;transform-origin:0 0;transform:scaleX(0.9480);-webkit-text-stroke:0.3px #323c48">Evidence elektronických uveřejnění ve VVZ</span>
<span class="t" style="left:341.60px;top:599.00px;font-size:18px;font-weight:700;color:#323c48;letter-spacing:-0.324px;will-change:transform;transform-origin:0 0;transform:scaleX(0.9499);-webkit-text-stroke:0.3px #323c48">Zaevidovaná uveřejnění ve VVZ</span>
<span class="t" style="left:340.95px;top:778.00px;font-size:18px;font-weight:700;color:#323c48;letter-spacing:-0.284px;will-change:transform;transform-origin:0 0;transform:scaleX(0.9522);-webkit-text-stroke:0.3px #323c48">Informace o odeslání oznámení o zahájení zadávacího řízení a jeho uveřejnění ve věstníku VZ</span>
<span class="t" style="left:340.95px;top:1016.00px;font-size:18px;font-weight:700;color:#323c48;letter-spacing:-0.298px;will-change:transform;transform-origin:0 0;transform:scaleX(0.9509);-webkit-text-stroke:0.3px #323c48">Informace o odeslání oznámení o výsledku a jeho uveřejnění ve Věstníku VZ</span>
<span class="t" style="left:642.30px;top:197.00px;font-size:13px;font-weight:400;color:#666;letter-spacing:-0.242px;-webkit-text-stroke:0.22px #666">Systémové číslo NEN:</span>
<span class="t" style="left:634.80px;top:238.00px;font-size:13px;font-weight:400;color:#666;letter-spacing:-0.243px;-webkit-text-stroke:0.22px #666">Název veřejné zakázky:</span>
<span class="t" style="left:536.50px;top:279.00px;font-size:13px;font-weight:400;color:#c4314b;letter-spacing:0.000px;-webkit-text-stroke:0.22px #c4314b">*</span>
<span class="t" style="left:543.40px;top:279.00px;font-size:13px;font-weight:400;color:#666;letter-spacing:-0.253px;-webkit-text-stroke:0.22px #666">Evidenční číslo zakázky ve Věstníku VZ:</span>
<span class="t" style="left:642.80px;top:320.00px;font-size:13px;font-weight:400;color:#666;letter-spacing:-0.286px;-webkit-text-stroke:0.22px #666">Evidenční číslo v TED:</span>
<span class="t" style="left:782.70px;top:199.00px;font-size:13px;font-weight:400;color:#111;letter-spacing:0.231px;-webkit-text-stroke:0.6px #111">N006/25/V00004747</span>
<span class="t" style="left:782.40px;top:240.00px;font-size:13px;font-weight:400;color:#111;letter-spacing:0.069px;-webkit-text-stroke:0.6px #111">Posílení kybernetické bezpečnosti města 2025-2035</span>
<span class="t" style="left:782.00px;top:281.00px;font-size:13px;font-weight:400;color:#111;letter-spacing:0.055px;-webkit-text-stroke:0.6px #111">Z2025-123456</span>
<span class="t" style="left:385.40px;top:458.00px;font-size:13px;font-weight:400;color:#666;letter-spacing:-0.350px;-webkit-text-stroke:0.22px #666;will-change:transform">Číslo</span>
<span class="t" style="left:385.40px;top:473.00px;font-size:13px;font-weight:400;color:#666;letter-spacing:-0.075px;-webkit-text-stroke:0.22px #666;will-change:transform">formuláře</span>
<span class="t" style="left:498.60px;top:463.00px;font-size:13px;font-weight:400;color:#666;letter-spacing:-0.450px;-webkit-text-stroke:0.22px #666;will-change:transform">Kód</span>
<span class="t" style="left:568.50px;top:463.00px;font-size:13px;font-weight:400;color:#666;letter-spacing:-0.131px;-webkit-text-stroke:0.22px #666;will-change:transform">Druh formuláře</span>
<span class="t" style="left:908.50px;top:463.00px;font-size:13px;font-weight:400;color:#666;letter-spacing:-0.176px;-webkit-text-stroke:0.22px #666;will-change:transform">Evidenční č. formuláře</span>
<span class="t" style="left:1089.20px;top:463.00px;font-size:13px;font-weight:400;color:#666;letter-spacing:-0.429px;-webkit-text-stroke:0.22px #666;will-change:transform">Odeslaný</span>
<span class="t" style="left:1178.50px;top:458.00px;font-size:13px;font-weight:400;color:#666;letter-spacing:-0.190px;-webkit-text-stroke:0.22px #666;will-change:transform">Datum a čas</span>
<span class="t" style="left:1179.50px;top:473.00px;font-size:13px;font-weight:400;color:#666;letter-spacing:-0.243px;-webkit-text-stroke:0.22px #666;will-change:transform">odeslání</span>
<span class="t" style="left:1328.50px;top:463.00px;font-size:13px;font-weight:400;color:#666;letter-spacing:-0.295px;-webkit-text-stroke:0.22px #666;will-change:transform">Datum a čas uveřejnění</span>
<span class="t" style="left:1498.50px;top:463.00px;font-size:13px;font-weight:400;color:#666;letter-spacing:0.036px;-webkit-text-stroke:0.22px #666;will-change:transform;width:87.50px;overflow:hidden">Popis formuláře</span>
<span class="t" style="left:1558.20px;top:429.00px;font-size:13px;font-weight:400;color:#2177b7;letter-spacing:-0.550px;-webkit-text-stroke:0.22px #2177b7">Vše</span>
<span class="t" style="left:834.70px;top:541.00px;font-size:13px;font-weight:400;color:#666;letter-spacing:-0.006px;-webkit-text-stroke:0.22px #666;will-change:transform">Žádné záznamy. V tomto seznamu nemáme co zobrazit.</span>
<span class="t" style="left:388.50px;top:640.00px;font-size:13px;font-weight:400;color:#2177b7;letter-spacing:-0.433px;-webkit-text-stroke:0.22px #2177b7">Nový</span>
<span class="t" style="left:1558.20px;top:643.00px;font-size:13px;font-weight:400;color:#2177b7;letter-spacing:-0.550px;-webkit-text-stroke:0.22px #2177b7">Vše</span>
<span class="t" style="left:402.40px;top:677.00px;font-size:13px;font-weight:400;color:#666;letter-spacing:-0.167px;-webkit-text-stroke:0.22px #666">Evidenční č. formuláře</span>
<span class="t" style="left:557.40px;top:677.00px;font-size:13px;font-weight:400;color:#666;letter-spacing:-0.123px;-webkit-text-stroke:0.22px #666">Druh formuláře</span>
<span class="t" style="left:987.20px;top:677.00px;font-size:13px;font-weight:400;color:#666;letter-spacing:-0.267px;-webkit-text-stroke:0.22px #666">Datum uveřejnění</span>
<span class="t" style="left:1167.40px;top:677.00px;font-size:13px;font-weight:400;color:#666;letter-spacing:-0.193px;-webkit-text-stroke:0.22px #666">Datum potvrzení</span>
<span class="t" style="left:402.40px;top:706.00px;font-size:13px;font-weight:400;color:#000;letter-spacing:-0.036px;-webkit-text-stroke:0.22px #000">F2025-123456</span>
<span class="t" style="left:558.40px;top:706.00px;font-size:13px;font-weight:400;color:#000;letter-spacing:-0.141px;-webkit-text-stroke:0.22px #000">Oznámení o zahájení zadávacího řízení – obecná veřejná zakázka</span>
<span class="t" style="left:987.20px;top:706.00px;font-size:13px;font-weight:400;color:#000;letter-spacing:-0.019px;-webkit-text-stroke:0.22px #000">17. 5. 2025 12:00</span>
<span class="t" style="left:1167.40px;top:706.00px;font-size:13px;font-weight:400;color:#000;letter-spacing:-0.047px;-webkit-text-stroke:0.22px #000">17. 5. 2025 2:00</span>
<span class="t" style="left:402.40px;top:731.00px;font-size:13px;font-weight:400;color:#000;letter-spacing:-0.036px;-webkit-text-stroke:0.22px #000">F2025-123456</span>
<span class="t" style="left:558.40px;top:731.00px;font-size:13px;font-weight:400;color:#000;letter-spacing:-0.141px;-webkit-text-stroke:0.22px #000">Oznámení o výsledku zadávacího řízení – obecná veřejná zakázka</span>
<span class="t" style="left:987.20px;top:731.00px;font-size:13px;font-weight:400;color:#000;letter-spacing:-0.019px;-webkit-text-stroke:0.22px #000">18. 5. 2025 12:00</span>
<span class="t" style="left:1167.40px;top:731.00px;font-size:13px;font-weight:400;color:#000;letter-spacing:-0.047px;-webkit-text-stroke:0.22px #000">18. 5. 2025 2:00</span>
<span class="t" style="left:532.50px;top:828.00px;font-size:13px;font-weight:400;color:#666;letter-spacing:-0.193px;-webkit-text-stroke:0.22px #666">Evidenční číslo formuláře ve Věstníku VZ:</span>
<span class="t" style="left:604.50px;top:869.00px;font-size:13px;font-weight:400;color:#666;letter-spacing:-0.064px;-webkit-text-stroke:0.22px #666">Kód pro související formulář:</span>
<span class="t" style="left:585.50px;top:910.00px;font-size:13px;font-weight:400;color:#666;letter-spacing:-0.166px;-webkit-text-stroke:0.22px #666">Datum odeslání do Věstníku VZ:</span>
<span class="t" style="left:518.50px;top:951.00px;font-size:13px;font-weight:400;color:#666;letter-spacing:-0.245px;-webkit-text-stroke:0.22px #666">Datum uveřejnění oznámení ve Věstníku VZ:</span>
<span class="t" style="left:782.40px;top:830.00px;font-size:13px;font-weight:400;color:#111;letter-spacing:-0.036px;-webkit-text-stroke:0.6px #111">F2025-123456</span>
<span class="t" style="left:782.60px;top:912.00px;font-size:13px;font-weight:400;color:#111;letter-spacing:-0.030px;-webkit-text-stroke:0.6px #111">17. 5. 2025</span>
<span class="t" style="left:1010.30px;top:912.00px;font-size:13px;font-weight:400;color:#111;letter-spacing:-0.200px;-webkit-text-stroke:0.6px #111">02:00</span>
<span class="t" style="left:782.60px;top:953.00px;font-size:13px;font-weight:400;color:#111;letter-spacing:-0.030px;-webkit-text-stroke:0.6px #111">17. 5. 2025</span>
<span class="t" style="left:1010.30px;top:953.00px;font-size:13px;font-weight:400;color:#111;letter-spacing:-0.200px;-webkit-text-stroke:0.6px #111">12:00</span>
<span class="t" style="left:532.50px;top:1066.00px;font-size:13px;font-weight:400;color:#666;letter-spacing:-0.193px;-webkit-text-stroke:0.22px #666">Evidenční číslo formuláře ve Věstníku VZ:</span>
<span class="t" style="left:604.50px;top:1107.00px;font-size:13px;font-weight:400;color:#666;letter-spacing:-0.064px;-webkit-text-stroke:0.22px #666">Kód pro související formulář:</span>
<span class="t" style="left:585.50px;top:1148.00px;font-size:13px;font-weight:400;color:#666;letter-spacing:-0.166px;-webkit-text-stroke:0.22px #666">Datum odeslání do Věstníku VZ:</span>
<span class="t" style="left:518.50px;top:1189.00px;font-size:13px;font-weight:400;color:#666;letter-spacing:-0.245px;-webkit-text-stroke:0.22px #666">Datum uveřejnění oznámení ve Věstníku VZ:</span>
<span class="t" style="left:782.40px;top:1068.00px;font-size:13px;font-weight:400;color:#111;letter-spacing:-0.036px;-webkit-text-stroke:0.6px #111">F2025-123456</span>
<span class="t" style="left:782.60px;top:1150.00px;font-size:13px;font-weight:400;color:#111;letter-spacing:-0.030px;-webkit-text-stroke:0.6px #111">18. 5. 2025</span>
<span class="t" style="left:1010.30px;top:1150.00px;font-size:13px;font-weight:400;color:#111;letter-spacing:-0.200px;-webkit-text-stroke:0.6px #111">02:00</span>
<span class="t" style="left:782.60px;top:1191.00px;font-size:13px;font-weight:400;color:#111;letter-spacing:-0.030px;-webkit-text-stroke:0.6px #111">18. 5. 2025</span>
<span class="t" style="left:1010.30px;top:1191.00px;font-size:13px;font-weight:400;color:#111;letter-spacing:-0.200px;-webkit-text-stroke:0.6px #111">12:00</span>
</body></html>
